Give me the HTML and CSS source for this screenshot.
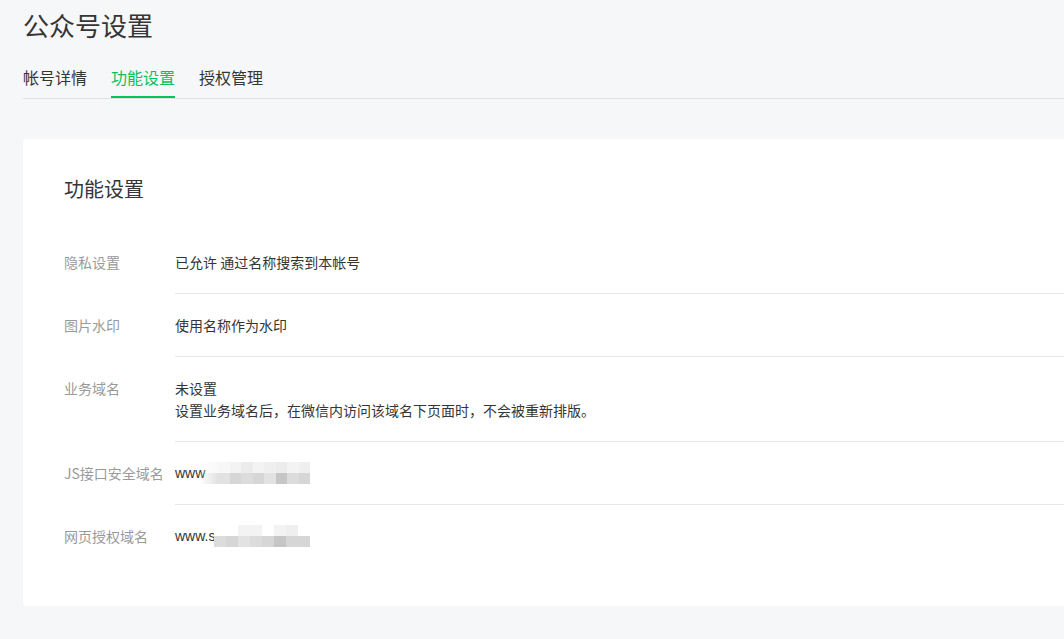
FILE: index.html
```html
<!DOCTYPE html>
<html lang="zh-CN">
<head>
<meta charset="utf-8">
<title>公众号设置</title>
<link rel="stylesheet" href="styles.css">
</head>
<body>
<div class="page">
  <h1 class="page-title">公众号设置</h1>
  <nav class="tabs">
    <a class="tab">帐号详情</a>
    <a class="tab active">功能设置</a>
    <a class="tab">授权管理</a>
  </nav>
  <section class="card">
    <h2 class="card-title">功能设置</h2>
    <div class="row">
      <div class="label">隐私设置</div>
      <div class="value">已允许 通过名称搜索到本帐号</div>
    </div>
    <div class="row">
      <div class="label">图片水印</div>
      <div class="value">使用名称作为水印</div>
    </div>
    <div class="row">
      <div class="label">业务域名</div>
      <div class="value">
        <div>未设置</div>
        <div>设置业务域名后，在微信内访问该域名下页面时，不会被重新排版。</div>
      </div>
    </div>
    <div class="row">
      <div class="label">JS接口安全域名</div>
      <div class="value domain">
        <span class="url">www</span>
        <span class="mosaic mosaic-a">
          <i class="fade"></i><i class="c0"></i><i class="c1"></i><i class="c2"></i><i class="c1"></i><i class="c3"></i><i class="c2"></i><i class="c1"></i><i class="c3"></i>
          <i class="fade2"></i><i class="d3"></i><i class="d2"></i><i class="d1"></i><i class="d2"></i><i class="d3"></i><i class="d4"></i><i class="d1"></i><i class="d2"></i>
        </span>
      </div>
    </div>
    <div class="row">
      <div class="label">网页授权域名</div>
      <div class="value domain">
        <span class="url">www.s</span>
        <span class="mosaic mosaic-b">
          <i class="w"></i><i class="w"></i><i class="c1"></i><i class="c1"></i><i class="w"></i><i class="c1"></i><i class="c3"></i><i class="w"></i>
          <i class="d1"></i><i class="d2"></i><i class="d3"></i><i class="d1"></i><i class="d2"></i><i class="d4"></i><i class="d2"></i><i class="d2"></i>
        </span>
      </div>
    </div>
  </section>
</div>
</body>
</html>
```

FILE: styles.css
```css
html, body {
  margin: 0;
  padding: 0;
  background: #f6f7f9;
  overflow: hidden;
}
body {
  font-family: "Noto Sans CJK SC", "Noto Sans", sans-serif;
  color: #353535;
}
.page {
  padding-left: 23px;
}
.page-title {
  margin: 0;
  padding-top: 7px;
  font-size: 26px;
  font-weight: 400;
  line-height: 36px;
  height: 58px;
  color: #353535;
}
.tabs {
  display: flex;
  gap: 24px;
  border-bottom: 1px solid #e0e1e3;
  height: 33px;
}
.tab {
  display: block;
  font-size: 16px;
  line-height: 24px;
  padding-bottom: 7px;
  border-bottom: 2px solid transparent;
  color: #353535;
  cursor: pointer;
}
.tab.active {
  color: #07c160;
  border-bottom-color: #07c160;
}
.card {
  margin-top: 40px;
  margin-right: -40px;
  background: #fff;
  border-radius: 3px;
  box-shadow: 0 1px 2px rgba(0, 0, 0, 0.05);
  padding: 36px 0 39px 41px;
}
.card-title {
  margin: 0 0 28px;
  font-size: 20px;
  line-height: 28px;
  font-weight: 400;
  color: #353535;
}
.row {
  display: flex;
  font-size: 14px;
  line-height: 22px;
}
.label {
  width: 111px;
  flex: none;
  padding: 20px 0;
  color: #9a9a9a;
}
.value {
  flex: 1;
  padding: 20px 0;
  border-bottom: 1px solid #e7e7e7;
  color: #353535;
}
.row:last-child .value {
  border-bottom: none;
}
.domain {
  display: flex;
  align-items: center;
  height: 22px;
}
.url {
  font-family: "Liberation Sans", sans-serif;
  font-size: 14px;
}
.mosaic {
  display: grid;
  grid-template-rows: 11px 11px;
  grid-auto-flow: row;
}
.mosaic-a {
  grid-template-columns: 18px repeat(8, 11.5px);
  margin-left: -5px;
}
.mosaic-b {
  grid-template-columns: repeat(8, 12px);
  margin-left: -1px;
}
.mosaic i {
  display: block;
}
.mosaic .w { background: #ffffff; }
.mosaic .fade { background: linear-gradient(90deg, rgba(255,255,255,0), #f8f8f8); }
.mosaic .fade2 { background: linear-gradient(90deg, rgba(255,255,255,0), #e2e2e2); }
.mosaic .c0 { background: #f7f7f7; }
.mosaic .c1 { background: #f3f3f3; }
.mosaic .c2 { background: #ececec; }
.mosaic .c3 { background: #efefef; }
.mosaic .d1 { background: #dcdcdc; }
.mosaic .d2 { background: #d6d6d6; }
.mosaic .d3 { background: #e2e2e2; }
.mosaic .d4 { background: #c6c6c6; }
```
